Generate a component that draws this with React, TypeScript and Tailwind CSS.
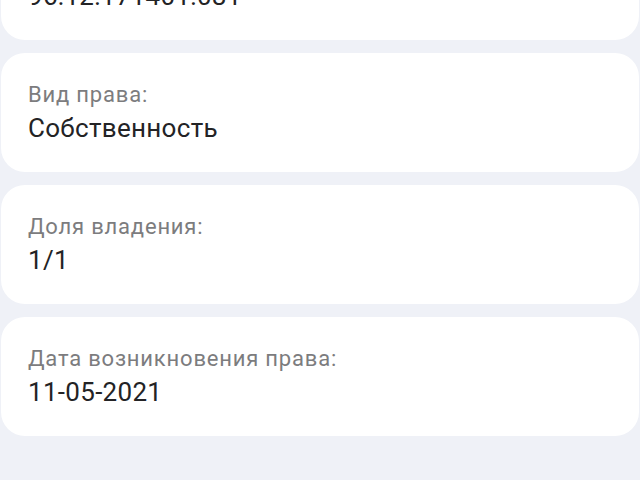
const items = [
  { label: 'Кадастровый номер:', value: '96:12:171401:081' },
  { label: 'Вид права:', value: 'Собственность' },
  { label: 'Доля владения:', value: '1/1' },
  { label: 'Дата возникновения права:', value: '11-05-2021' },
];

const InfoCard = ({ label, value }: { label: string; value: string }) => (
  <div className="bg-white rounded-[24px] mx-px px-[27px] pt-[29px] pb-[29px] flex flex-col gap-[5px]">
    <span className="text-[22px] leading-[26px] tracking-[0.8px] text-[#7c7c7e]">{label}</span>
    <span className="text-[26px] leading-[30px] tracking-[0.3px] text-[#232325]">{value}</span>
  </div>
);

export default function App() {
  return (
    <div
      className="h-[480px] w-[640px] overflow-hidden bg-[#eff1f7]"
      style={{ fontFamily: 'Roboto, "Noto Sans", sans-serif' }}
    >
      <div className="-mt-[79px] flex flex-col gap-[13px]">
        {items.map((item) => (
          <InfoCard key={item.label} label={item.label} value={item.value} />
        ))}
      </div>
    </div>
  );
}
